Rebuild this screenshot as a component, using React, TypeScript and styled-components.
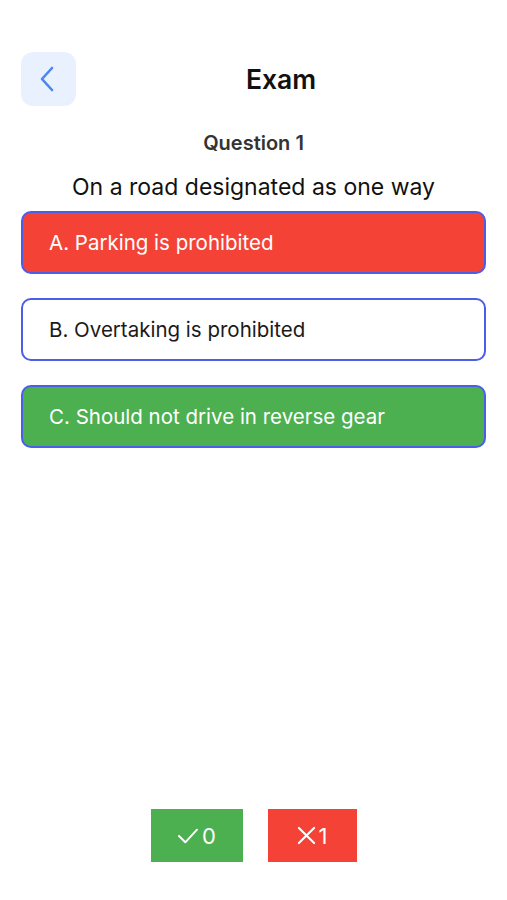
import React from "react";
import styled, { createGlobalStyle } from "styled-components";

const Global = createGlobalStyle`
  html, body { margin: 0; padding: 0; background: #ffffff; }
  body { font-family: Inter, "Noto Sans", "Liberation Sans", sans-serif; }
`;

const Page = styled.div`
  width: 507px;
  height: 900px;
  box-sizing: border-box;
  display: flex;
  flex-direction: column;
  padding: 52px 21px 0 21px;
`;

const Header = styled.div`
  display: flex;
  align-items: center;
  height: 54px;
`;

const BackButton = styled.button`
  width: 55px;
  height: 54px;
  border: none;
  border-radius: 12px;
  background: #e9f1fe;
  display: flex;
  align-items: center;
  justify-content: center;
  padding: 0;
  padding-right: 4px;
`;

const Title = styled.h1`
  flex: 1;
  margin: 0;
  text-align: center;
  font-size: 26.5px;
  font-weight: 600;
  color: #111;
`;

const QuestionLabel = styled.div`
  margin-top: 24px;
  text-align: center;
  font-size: 20px;
  font-weight: 600;
  color: #333;
  line-height: 26px;
`;

const QuestionText = styled.div`
  margin-top: 17px;
  text-align: center;
  font-size: 23px;
  color: #111;
  line-height: 28px;
`;

const Options = styled.div`
  margin-top: 10px;
  display: flex;
  flex-direction: column;
  gap: 24px;
`;

const Option = styled.div<{ $tone: "wrong" | "right" | "plain" }>`
  height: 63px;
  box-sizing: border-box;
  border: 2px solid #4a5ee6;
  border-radius: 10px;
  display: flex;
  align-items: center;
  padding-left: 26px;
  font-size: 20.5px;
  color: ${(p) => (p.$tone === "plain" ? "#1a1a1a" : "#ffffff")};
  background: ${(p) =>
    p.$tone === "wrong" ? "#f44336" : p.$tone === "right" ? "#4caf50" : "#ffffff"};
`;

const Spacer = styled.div`
  flex: 1;
`;

const Score = styled.div`
  display: flex;
  justify-content: center;
  gap: 25px;
  margin-bottom: 38px;
`;

const ScoreBox = styled.div<{ $tone: "right" | "wrong" }>`
  width: ${(p) => (p.$tone === "right" ? "92px" : "89px")};
  height: 53px;
  display: flex;
  align-items: center;
  justify-content: center;
  gap: 3px;
  color: #fff;
  font-size: 22px;
  background: ${(p) => (p.$tone === "right" ? "#4caf50" : "#f44336")};
`;

export default function App() {
  return (
    <>
      <Global />
      <Page>
        <Header>
          <BackButton aria-label="back">
            <svg width="16" height="26" viewBox="0 0 16 26" fill="none">
              <path d="M13 2 L3 13 L13 24" stroke="#4a86f0" strokeWidth="2.6" strokeLinecap="round" strokeLinejoin="round" />
            </svg>
          </BackButton>
          <Title>Exam</Title>
        </Header>
        <QuestionLabel>Question 1</QuestionLabel>
        <QuestionText>On a road designated as one way</QuestionText>
        <Options>
          <Option $tone="wrong">A. Parking is prohibited</Option>
          <Option $tone="plain">B. Overtaking is prohibited</Option>
          <Option $tone="right">C. Should not drive in reverse gear</Option>
        </Options>
        <Spacer />
        <Score>
          <ScoreBox $tone="right">
            <svg width="22" height="18" viewBox="0 0 24 20" fill="none">
              <path d="M2 10 L9 17 L22 3" stroke="#fff" strokeWidth="2.2" strokeLinecap="round" strokeLinejoin="round" />
            </svg>
            <span>0</span>
          </ScoreBox>
          <ScoreBox $tone="wrong">
            <svg width="19" height="19" viewBox="0 0 20 20" fill="none">
              <path d="M2 2 L18 18 M18 2 L2 18" stroke="#fff" strokeWidth="2.2" strokeLinecap="round" />
            </svg>
            <span>1</span>
          </ScoreBox>
        </Score>
      </Page>
    </>
  );
}
